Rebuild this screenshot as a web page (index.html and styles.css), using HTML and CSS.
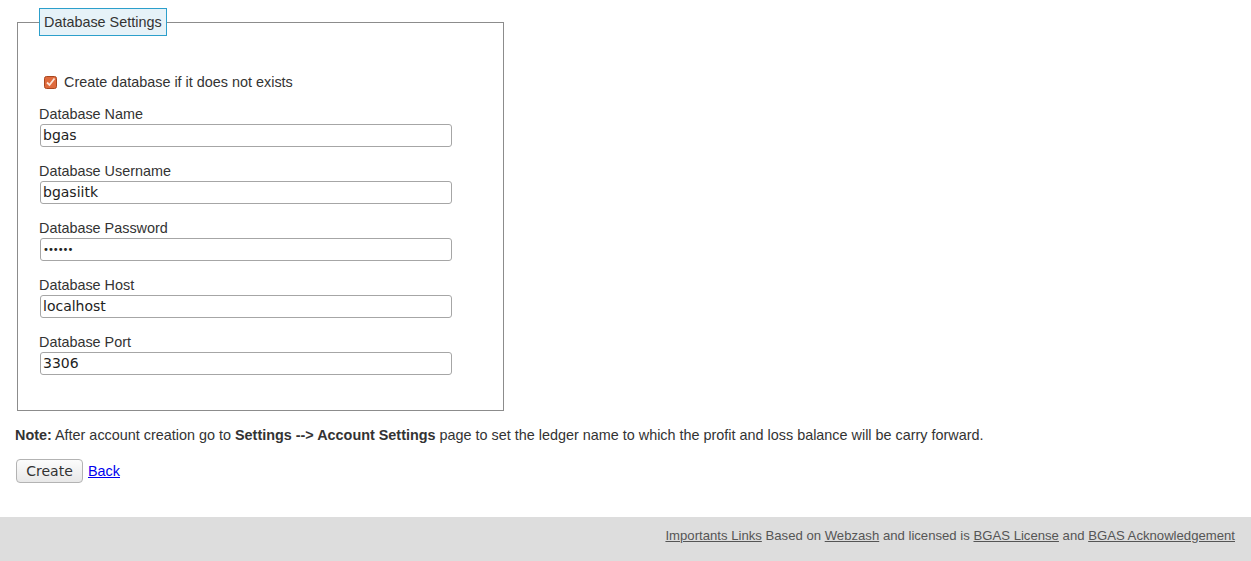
FILE: index.html
```html
<!DOCTYPE html>
<html>
<head>
<meta charset="utf-8">
<title>Database Settings</title>
<link rel="stylesheet" href="styles.css">
</head>
<body>
<div class="main">
  <fieldset class="settings">
    <legend class="legend">Database Settings</legend>
    <div class="check-row">
      <span class="checkbox"><svg width="13" height="13" viewBox="0 0 13 13"><rect x="0.5" y="0.5" width="12" height="12" rx="2" fill="#df6a3c" stroke="#a9471f"/><path d="M3 6.5 L5.5 9 L10.5 2.5" fill="none" stroke="#fbe3d6" stroke-width="1.8"/></svg></span>
      <span class="check-label">Create database if it does not exists</span>
    </div>
    <div class="field">
      <label class="label">Database Name</label>
      <div class="input">bgas</div>
    </div>
    <div class="field">
      <label class="label">Database Username</label>
      <div class="input">bgasiitk</div>
    </div>
    <div class="field">
      <label class="label">Database Password</label>
      <div class="input pass">••••••</div>
    </div>
    <div class="field">
      <label class="label">Database Host</label>
      <div class="input">localhost</div>
    </div>
    <div class="field">
      <label class="label">Database Port</label>
      <div class="input">3306</div>
    </div>
  </fieldset>
  <p class="note"><b>Note:</b> After account creation go to <b>Settings --&gt; Account Settings</b> page to set the ledger name to which the profit and loss balance will be carry forward.</p>
  <div class="actions">
    <button class="button">Create</button>
    <a class="back" href="#">Back</a>
  </div>
</div>
<div class="footer">
  <a href="#">Importants Links</a> Based on <a href="#">Webzash</a> and licensed is <a href="#">BGAS License</a> and <a href="#">BGAS Acknowledgement</a>
</div>
</body>
</html>
```

FILE: styles.css
```css
html, body {
  margin: 0;
  padding: 0;
  background: #fff;
}
body {
  font-family: "Liberation Sans", Arial, sans-serif;
  font-size: 14.4px;
  color: #333;
}
.main {
  padding: 8px 0 0 15px;
}
.settings {
  box-sizing: border-box;
  width: 487px;
  margin: 0 0 0 2px;
  padding: 0 21px 35px 21px;
  border: 1px solid #8c8c8c;
}
.legend {
  box-sizing: border-box;
  height: 28px;
  padding: 4px 4px;
  line-height: 18px;
  background: #e6f2f8;
  border: 1px solid #2c9fcb;
  color: #333;
}
.check-row {
  display: flex;
  align-items: center;
  margin-top: 38px;
  height: 17px;
  line-height: 17px;
}
.checkbox {
  display: block;
  width: 13px;
  height: 13px;
  margin: 0 7px 0 5px;
}
.checkbox svg {
  display: block;
}
.field {
  margin-top: 15px;
}
.field + .field {
  margin-top: 16px;
}
.label {
  display: block;
  line-height: 17px;
  margin-bottom: 1px;
  color: #333;
}
.input {
  box-sizing: border-box;
  width: 412px;
  height: 23px;
  margin-left: 1px;
  padding: 0 2px;
  border: 1px solid #a6a6a6;
  border-radius: 3px;
  font-family: "DejaVu Sans", sans-serif;
  font-size: 14px;
  line-height: 21px;
  color: #222;
  background: #fff;
}
.pass {
  font-size: 10px;
  letter-spacing: -1px;
}
.note {
  margin: 16px 0 0 0;
  line-height: 17px;
}
.actions {
  display: flex;
  align-items: center;
  gap: 5px;
  margin-top: 15px;
  margin-left: 1px;
}
.button {
  box-sizing: border-box;
  width: 67px;
  height: 24px;
  padding: 0;
  border: 1px solid #b3b3b3;
  border-radius: 4px;
  background: linear-gradient(#fcfcfc, #e8e8e8);
  font-family: "DejaVu Sans", sans-serif;
  font-size: 14px;
  color: #333;
}
.back {
  color: #0000ee;
  text-decoration: underline;
  font-size: 14.4px;
}
.footer {
  margin-top: 34px;
  background: #dddddd;
  height: 60px;
  box-sizing: border-box;
  padding: 10px 16px 0 0;
  text-align: right;
  font-size: 13.15px;
  line-height: 17px;
  color: #555;
}
.footer a {
  color: #555;
  text-decoration: underline;
}
```
